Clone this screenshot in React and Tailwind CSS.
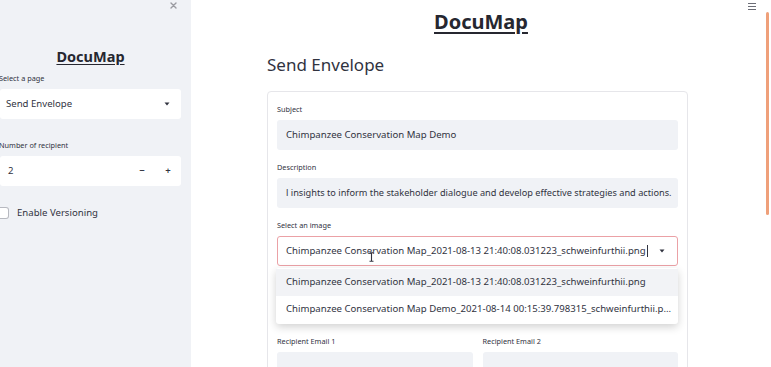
import React from 'react';

const font = { fontFamily: '"Noto Sans", "Open Sans", sans-serif' };

const Caret = () => (
  <svg width="6" height="4" viewBox="0 0 6 4" className="shrink-0">
    <path d="M0.5 0.5 L5.5 0.5 L3 3.5 Z" fill="#31333f" />
  </svg>
);

const Label = ({ children, className = '' }) => (
  <div className={`text-[7.3px] leading-[10px] text-[#31333f] ${className}`}>{children}</div>
);

const Field = ({ value, className = '', size = 'text-[9.6px]' }) => (
  <div className={`h-[30px] bg-[#f0f2f6] rounded-[3px] flex items-center px-[9px] ${size} text-[#31333f] whitespace-nowrap overflow-hidden ${className}`}>
    {value}
  </div>
);

const Sidebar = () => (
  <div className="w-[191px] shrink-0 h-full bg-[#f0f2f6] relative pr-[10px]">
    <svg className="absolute left-[170px] top-[2px]" width="7" height="7" viewBox="0 0 7 7">
      <path d="M1 1 L6 6 M6 1 L1 6" stroke="#9a9ba1" strokeWidth="1.4" strokeLinecap="round" />
    </svg>
    <div className="pt-[44px] text-center">
      <span className="text-[14.5px] font-bold underline underline-offset-2 text-[#262730]">DocuMap</span>
    </div>
    <Label className="mt-[5px] -ml-[1px]">Select a page</Label>
    <div className="mt-[6px] h-[30px] bg-white rounded-[3px] flex items-center justify-between pl-[6px] pr-[11px] text-[9.6px] text-[#31333f]">
      <span>Send Envelope</span>
      <Caret />
    </div>
    <Label className="mt-[21px] -ml-[1px]">Number of recipient</Label>
    <div className="mt-[6px] h-[30px] bg-white rounded-[3px] flex items-center pl-[8px] text-[9.6px] text-[#31333f]">
      <span className="flex-1">2</span>
      <span className="w-[26px] text-center font-semibold">−</span>
      <span className="w-[26px] text-center font-semibold">+</span>
    </div>
    <div className="mt-[20px] flex items-center gap-[8px] -ml-[1px]">
      <div className="w-[10px] h-[12px] bg-white border border-[#b7b9c0] rounded-r-[3px] border-l-0" />
      <span className="text-[9.6px] text-[#31333f]">Enable Versioning</span>
    </div>
  </div>
);

const Main = () => (
  <div className="flex-1 h-full relative">
    <div className="text-center pt-[8px]">
      <span className="text-[20px] leading-[28px] font-bold underline underline-offset-[3px] text-[#262730]">DocuMap</span>
    </div>
    <div className="pl-[76px] w-[421px] box-content">
      <div className="mt-[18px] text-[17px] leading-[22px] text-[#31333f]">Send Envelope</div>
      <div className="mt-[15px] border border-[#e6e6ea] rounded-[4px] px-[9px] pt-[12px] h-[300px]">
        <Label>Subject</Label>
        <Field className="mt-[6px]" value="Chimpanzee Conservation Map Demo" />
        <Label className="mt-[12px]">Description</Label>
        <Field className="mt-[6px]" size="text-[9.2px]" value="l insights to inform the stakeholder dialogue and develop effective strategies and actions." />
        <Label className="mt-[12px]">Select an image</Label>
        <div className="relative mt-[6px]">
          <div className="h-[30px] bg-white border border-[#eba1a6] rounded-[3px] flex items-center justify-between pl-[8px] pr-[12px] text-[9.6px] text-[#31333f] whitespace-nowrap">
            <span className="flex items-center">
              Chimpanzee Conservation Map_2021-08-13 21:40:08.031223_schweinfurthii.png
              <span className="inline-block w-px h-[12px] bg-[#31333f] ml-[1px]" />
            </span>
            <Caret />
          </div>
          {/* mouse I-beam */}
          <svg className="absolute left-[92px] top-[16px]" width="5" height="10" viewBox="0 0 5 10">
            <path d="M0.5 0.8 H4.5 M2.5 0.8 V9.2 M0.5 9.2 H4.5" stroke="#31333f" strokeWidth="1.1" />
          </svg>
          <div className="absolute left-[-1px] right-0 top-[32px] bg-white rounded-[3px] shadow-[0_3px_8px_rgba(0,0,0,0.18)] py-[1px] text-[9.6px] text-[#31333f] whitespace-nowrap z-10">
            <div className="h-[27px] flex items-center pl-[10px] bg-[#f2f3f6]">Chimpanzee Conservation Map_2021-08-13 21:40:08.031223_schweinfurthii.png</div>
            <div className="h-[27px] flex items-center pl-[10px]">Chimpanzee Conservation Map Demo_2021-08-14 00:15:39.798315_schweinfurthii.p...</div>
          </div>
        </div>
        <div className="mt-[70px] grid grid-cols-2 gap-[10px]">
          <div>
            <Label>Recipient Email 1</Label>
            <Field className="mt-[6px]" value="" />
          </div>
          <div>
            <Label>Recipient Email 2</Label>
            <Field className="mt-[6px]" value="" />
          </div>
        </div>
      </div>
    </div>
    <div className="absolute right-[15px] top-[3px] flex flex-col gap-[2px]">
      <div className="w-[8px] h-px bg-[#6b6d76]" />
      <div className="w-[8px] h-px bg-[#6b6d76]" />
      <div className="w-[8px] h-px bg-[#6b6d76]" />
    </div>
    <div className="absolute right-[2px] top-[12px] w-[3px] h-[203px] rounded-full bg-[#efa07a]" />
  </div>
);

export default function App() {
  return (
    <div className="w-[771px] h-[367px] overflow-hidden flex bg-white" style={font}>
      <Sidebar />
      <Main />
    </div>
  );
}
